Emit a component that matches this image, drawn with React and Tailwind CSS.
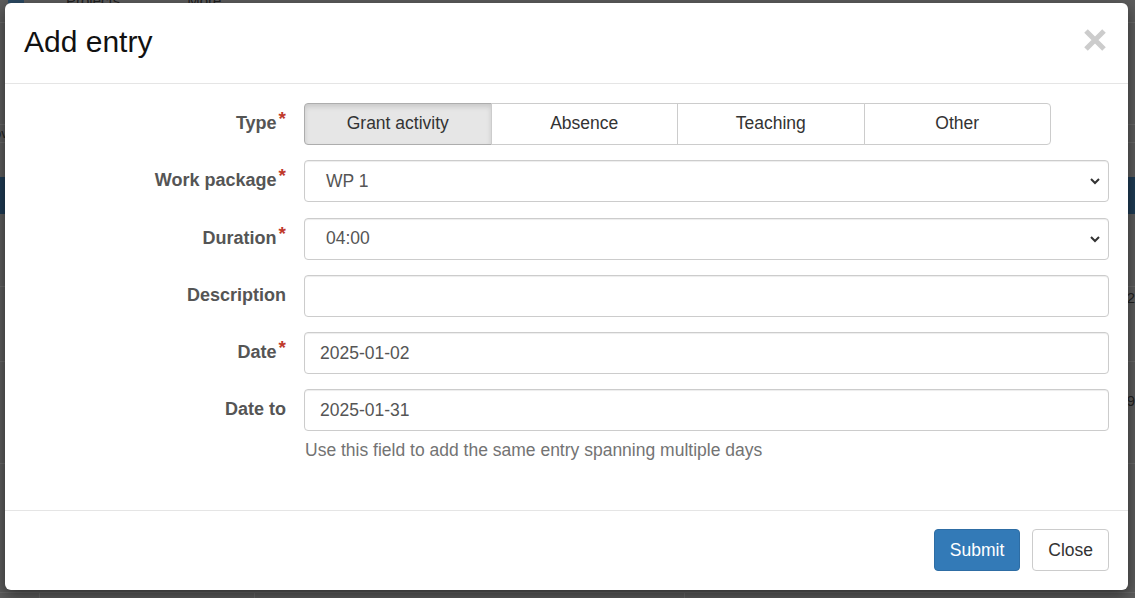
import React from "react";

function Label({ text, required }) {
  return (
    <div className="w-[262px] shrink-0 h-[42px] flex items-center justify-end text-[18px] font-bold text-[#555] pb-[1px]">
      <span>{text}</span>
      {required ? (
        <span className="ml-[2px] text-[#c0392b] text-[19px] leading-none relative -top-[5px]">*</span>
      ) : null}
    </div>
  );
}

function Chevron() {
  return (
    <svg className="absolute right-[7px] top-1/2 -translate-y-1/2" width="12" height="8" viewBox="0 0 12 8">
      <path d="M2 2 L6 6 L10 2" fill="none" stroke="#333" strokeWidth="2" />
    </svg>
  );
}

function SelectBox({ value }) {
  return (
    <div className="relative w-full h-[42px] rounded-[4px] border border-[#ccc] bg-white shadow-[inset_0_1px_1px_rgba(0,0,0,0.075)] flex items-center pl-[21px] text-[17.5px] text-[#555]">
      {value}
      <Chevron />
    </div>
  );
}

function InputBox({ value }) {
  return (
    <div className="w-full h-[42px] rounded-[4px] border border-[#ccc] bg-white shadow-[inset_0_1px_1px_rgba(0,0,0,0.075)] flex items-center pl-[15px] text-[17.5px] text-[#555]">
      {value}
    </div>
  );
}

export default function App() {
  const types = ["Grant activity", "Absence", "Teaching", "Other"];
  return (
    <div className="relative w-[1135px] h-[598px] overflow-hidden bg-[#5d5d5d] font-['Liberation_Sans',Arial,sans-serif]">
      {/* dimmed page underneath */}
      <div className="flex flex-col w-full h-full">
        <div className="h-[8px] flex items-end pl-[8px] text-[15px] text-[#222] leading-none">
          <div className="w-[16px] h-[8px] bg-[#2c4a63] rounded-b-[3px]" />
          <span className="-mt-[10px] ml-[42px]">Projects</span>
          <span className="-mt-[10px] ml-[67px]">More</span>
        </div>
        <div className="h-[15px] border-b border-[#6a6a6a]" />
        <div className="h-[86px] flex items-center text-[40px] text-black leading-none">
          <span className="-ml-[22px]">e</span>
        </div>
        <div className="h-[16px] border-b border-[#6a6a6a]" />
        <div className="h-[18px] border-b border-[#6a6a6a] text-[13px] text-[#222] -ml-[6px] leading-[18px]">ov</div>
        <div className="h-[34px]" />
        <div className="h-[37px] bg-[#1f3c55]" />
        <div className="h-[72px]" />
        <div className="h-[1px] bg-[#6a6a6a]" />
        <div className="h-[25px] flex justify-end text-[15px] text-[#222]">2</div>
        <div className="h-[50px] border-b border-[#6a6a6a]" />
        <div className="h-[50px] flex justify-end items-end text-[15px] text-[#222]">9</div>
        <div className="h-[52px] border-b border-[#6a6a6a]" />
        <div className="flex-1" />
        <div className="h-[6px] flex border-t border-[#6a6a6a]">
          <div className="w-[40px] border-r border-[#6a6a6a]" />
          <div className="w-[215px] border-r border-[#6a6a6a]" />
          <div className="w-[430px] border-r border-[#6a6a6a]" />
          <div className="flex-1" />
        </div>
      </div>

      {/* modal */}
      <div className="absolute left-[5px] top-[3px] w-[1123px] h-[587px] rounded-[6px] bg-white shadow-[0_5px_15px_rgba(0,0,0,0.5)] flex flex-col">
        <div className="h-[81px] shrink-0 border-b border-[#e5e5e5] flex items-center justify-between pl-[19px] pr-[21px]">
          <h4 className="text-[30px] leading-none text-[#111] pb-[2px]">Add entry</h4>
          <button className="w-[24px] h-[24px] -mt-[6px]" aria-label="Close">
            <svg width="24" height="24" viewBox="0 0 24 24">
              <path d="M3 3 L21 21 M21 3 L3 21" stroke="#cccccc" strokeWidth="5" fill="none" />
            </svg>
          </button>
        </div>

        <div className="flex-1 pt-[19px] px-[19px]">
          <div className="flex flex-col gap-[15.3px]">
            <div className="flex gap-[18px] h-[42px]">
              <Label text="Type" required />
              <div className="w-[747px] flex">
                {types.map((t, i) => (
                  <div
                    key={t}
                    className={
                      i === 0
                        ? "flex-1 h-[42px] flex items-center justify-center text-[17.5px] text-[#333] bg-[#e6e6e6] border border-[#adadad] rounded-l-[4px] shadow-[inset_0_3px_5px_rgba(0,0,0,0.125)] pb-[1px]"
                        : i === 3
                        ? "flex-1 h-[42px] flex items-center justify-center text-[17.5px] text-[#333] bg-white border border-[#ccc] -ml-px rounded-r-[4px] pb-[1px]"
                        : "flex-1 h-[42px] flex items-center justify-center text-[17.5px] text-[#333] bg-white border border-[#ccc] -ml-px pb-[1px]"
                    }
                  >
                    {t}
                  </div>
                ))}
              </div>
            </div>

            <div className="flex gap-[18px] h-[42px]">
              <Label text="Work package" required />
              <SelectBox value="WP 1" />
            </div>

            <div className="flex gap-[18px] h-[42px]">
              <Label text="Duration" required />
              <SelectBox value="04:00" />
            </div>

            <div className="flex gap-[18px] h-[42px]">
              <Label text="Description" />
              <InputBox value="" />
            </div>

            <div className="flex gap-[18px] h-[42px]">
              <Label text="Date" required />
              <InputBox value="2025-01-02" />
            </div>

            <div className="flex gap-[18px] h-[42px]">
              <Label text="Date to" />
              <InputBox value="2025-01-31" />
            </div>
          </div>
          <div className="pl-[281px] mt-[9px] text-[17.5px] leading-[20px] text-[#737373]">
            Use this field to add the same entry spanning multiple days
          </div>
        </div>

        <div className="h-[80px] shrink-0 border-t border-[#e5e5e5] flex justify-end items-start pt-[18px] pr-[19px] gap-[12px]">
          <button className="h-[42px] px-[15px] rounded-[4px] bg-[#337ab7] border border-[#2e6da4] text-white text-[17.5px]">
            Submit
          </button>
          <button className="h-[42px] px-[15px] rounded-[4px] bg-white border border-[#ccc] text-[#333] text-[17.5px]">
            Close
          </button>
        </div>
      </div>
    </div>
  );
}
